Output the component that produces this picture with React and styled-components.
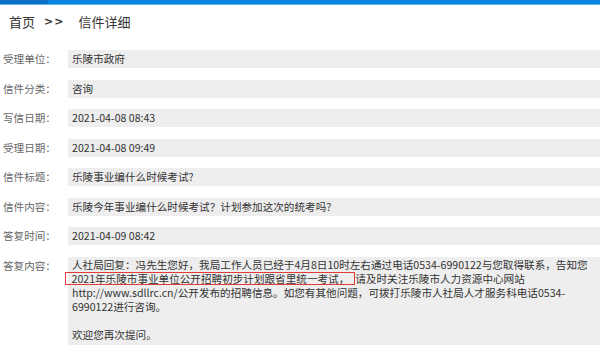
import React from 'react';
import styled, { createGlobalStyle } from 'styled-components';

const GlobalStyle = createGlobalStyle`
    body {
        margin: 0;
        background: #ffffff;
        font-family: "Noto Sans CJK SC", "Noto Sans", sans-serif;
    }
`

const rows = [
    { label: '受理单位：', value: '乐陵市政府' },
    { label: '信件分类：', value: '咨询' },
    { label: '写信日期：', value: '2021-04-08 08:43' },
    { label: '受理日期：', value: '2021-04-08 09:49' },
    { label: '信件标题：', value: '乐陵事业编什么时候考试?' },
    { label: '信件内容：', value: '乐陵今年事业编什么时候考试？计划参加这次的统考吗?' },
    { label: '答复时间：', value: '2021-04-09 08:42' },
];

export default class App extends React.Component {
    render() {
        return (
            <Page>
                <GlobalStyle />
                <TopBar>
                    <ActiveTab />
                </TopBar>
                <Breadcrumb>
                    <span>首页</span>
                    <Sep>&gt;&gt;</Sep>
                    <span>信件详细</span>
                </Breadcrumb>
                <Details>
                    {rows.map((row, index) => {
                        return (
                            <Row key={index}>
                                <Label>{row.label}</Label>
                                <Value>{row.value}</Value>
                            </Row>
                        )
                    })}
                    <Row>
                        <Label>答复内容：</Label>
                        <Reply>
                            人社局回复：冯先生您好，我局工作人员已经于4月8日10时左右通过电话0534-6990122与您取得联系，告知您
                            <Highlight>2021年乐陵市事业单位公开招聘初步计划跟省里统一考试，</Highlight>
                            请及时关注乐陵市人力资源中心网站http://www.sdllrc.cn/公开发布的招聘信息。如您有其他问题，可拨打乐陵市人社局人才服务科电话0534-6990122进行咨询。
                            <br />
                            <br />
                            欢迎您再次提问。
                        </Reply>
                    </Row>
                </Details>
            </Page>
        )
    }
}

const Page = styled.div`
    width: 600px;
    overflow: hidden;
`

const TopBar = styled.div`
    height: 4px;
    background: #0a86e0;
    border-bottom: 1px solid #62b4f0;
    display: flex;
`

const ActiveTab = styled.div`
    width: 48px;
    background: #0c6fc6;
`

const Breadcrumb = styled.div`
    display: flex;
    align-items: center;
    padding: 6px 0 0 9px;
    height: 20px;
    font-size: 13px;
    color: #333333;
`

const Sep = styled.span`
    margin: 0 14px 0 9px;
    font-family: "DejaVu Sans", sans-serif;
    font-size: 11px;
    font-weight: bold;
    letter-spacing: 1px;
`

const Details = styled.div`
    display: flex;
    flex-direction: column;
    gap: 11.5px;
    margin-top: 19px;
`

const Row = styled.div`
    display: flex;
    align-items: flex-start;
`

const Label = styled.div`
    width: 65px;
    flex-shrink: 0;
    padding-left: 3px;
    line-height: 18px;
    font-size: 10.6px;
    color: #666666;
`

const Value = styled.div`
    flex: 1;
    min-height: 18px;
    line-height: 18px;
    padding: 0 4px;
    background: #eeeeee;
    font-size: 10.6px;
    color: #333333;
`

const Reply = styled(Value)`
    line-height: 14px;
    padding: 1px 4px 3px 4px;
`

const Highlight = styled.span`
    display: inline-block;
    vertical-align: top;
    line-height: 11px;
    margin-left: -7px;
    padding: 0 5px 0 5.5px;
    border: 1.5px solid #e23a36;
    white-space: nowrap;
`
